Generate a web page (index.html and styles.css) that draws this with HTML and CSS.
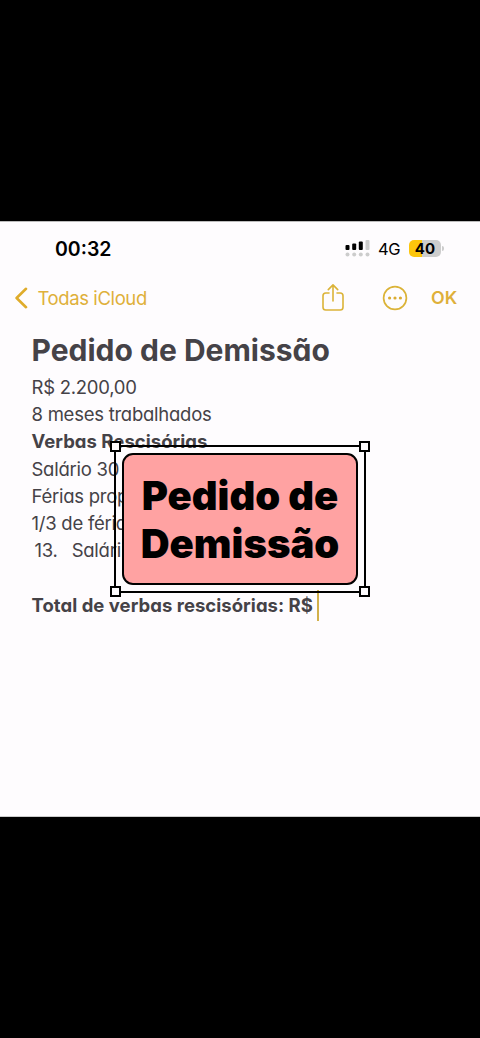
FILE: index.html
```html
<!DOCTYPE html>
<html lang="pt-BR">
<head>
  <meta charset="UTF-8">
  <meta name="viewport" content="width=device-width, initial-scale=1.0">
  <title>Pedido de Demissão</title>
  <link rel="stylesheet" href="styles.css">
</head>
<body>
  <main class="screen">
    <header class="status-bar">
      <span class="time">00:32</span>
      <div class="status-icons">
        <svg class="signal" width="26" height="18" viewBox="0 0 26 18">
          <rect x="0.5" y="6" width="4" height="5" rx="1" fill="#000"/>
          <rect x="7.2" y="4.5" width="4" height="6.5" rx="1" fill="#000"/>
          <rect x="13.8" y="2.5" width="4" height="8.5" rx="1" fill="#000"/>
          <rect x="20.5" y="1" width="4" height="10" rx="1" fill="#ccc"/>
          <g fill="#ccc">
            <circle cx="2.5" cy="15.4" r="2"/>
            <circle cx="9.2" cy="15.4" r="2"/>
            <circle cx="15.8" cy="15.4" r="2"/>
            <circle cx="22.5" cy="15.4" r="2"/>
          </g>
        </svg>
        <span class="network">4G</span>
        <div class="battery">40</div>
        <span class="battery-tip"></span>
      </div>
    </header>

    <nav class="toolbar">
      <a class="back">
        <svg width="13" height="22" viewBox="0 0 13 22" fill="none" stroke="#dfac2b" stroke-width="2.6" stroke-linecap="round" stroke-linejoin="round">
          <path d="M11 1.8 L1.6 11 L11 20.2"/>
        </svg>
        <span>Todas iCloud</span>
      </a>
      <div class="actions">
        <svg width="22" height="28" viewBox="0 0 22 28" fill="none" stroke="#dbb338" stroke-width="1.6" stroke-linecap="round" stroke-linejoin="round">
          <path d="M7 9H3.8Q1 9 1 11.8V23.2Q1 26 3.8 26H18.2Q21 26 21 23.2V11.8Q21 9 18.2 9H15"/>
          <path d="M11 17V1M6.3 5.6L11 0.9L15.7 5.6"/>
        </svg>
        <svg class="more" width="26" height="26" viewBox="0 0 26 26">
          <circle cx="13" cy="13" r="11.4" fill="none" stroke="#dbb338" stroke-width="1.7"/>
          <g fill="#dbac32">
            <circle cx="7.6" cy="13" r="1.6"/>
            <circle cx="13" cy="13" r="1.6"/>
            <circle cx="18.4" cy="13" r="1.6"/>
          </g>
        </svg>
        <span class="ok">OK</span>
      </div>
    </nav>

    <article class="note">
      <h1>Pedido de Demissão</h1>
      <p>R$ 2.200,00</p>
      <p>8 meses trabalhados</p>
      <p class="strong">Verbas Rescisórias</p>
      <p>Salário 30</p>
      <p>Férias prop</p>
      <p>1/3 de féria</p>
      <p class="item"><span>13.</span><span>Salári</span></p>
      <p class="total strong">Total de verbas rescisórias: R$<span class="caret"></span></p>
    </article>

    <div class="selection">
      <div class="sticker">Pedido de<br>Demissão</div>
      <i class="handle top left"></i>
      <i class="handle top right"></i>
      <i class="handle bottom left"></i>
      <i class="handle bottom right"></i>
    </div>
  </main>
</body>
</html>
```
FILE: styles.css
```css
* {
  box-sizing: border-box;
}

body {
  margin: 0;
  min-height: 1038px;
  padding-top: 221px;
  background: #000;
  font-family: Inter, "Liberation Sans", sans-serif;
}

.screen {
  position: relative;
  height: 596px;
  background: #fefcfe;
  border-top: 1px solid #bbb;
  border-bottom: 1px solid #ccc;
}

.status-bar {
  display: flex;
  justify-content: space-between;
  align-items: center;
  height: 54px;
  padding: 0 36px 0 55px;
}

.time {
  font-size: 19.5px;
  font-weight: 600;
}

.status-icons {
  display: flex;
  align-items: center;
  height: 20px;
  margin-top: -2px;
}

.network {
  margin-left: 7px;
  width: 23px;
  padding-top: 1px;
  font-size: 16.5px;
  letter-spacing: -0.4px;
  white-space: nowrap;
}

.battery {
  width: 32px;
  height: 17px;
  margin-left: 8px;
  border-radius: 5px;
  background: linear-gradient(to right, #fcc60c 42%, #cdcdcd 42%);
  font-size: 15px;
  line-height: 17px;
  font-weight: 700;
  text-align: center;
}

.battery-tip {
  width: 2px;
  height: 5px;
  margin-left: 1px;
  border-radius: 0 2px 2px 0;
  background: #ccc;
}

.toolbar {
  display: flex;
  justify-content: space-between;
  align-items: center;
  height: 43px;
  padding: 0 23px 0 15px;
  color: #dfb03a;
}

.back {
  display: flex;
  align-items: center;
  gap: 9.5px;
  font-size: 18.5px;
  line-height: 22px;
  letter-spacing: -0.4px;
}

.actions {
  display: flex;
  align-items: center;
}

.more {
  margin: 0 23px 0 38px;
}

.ok {
  width: 26px;
  font-size: 17.8px;
  font-weight: 600;
}

.note {
  padding: 10px 32px 0 31.5px;
  color: #454247;
  font-feature-settings: "cv11";
  white-space: nowrap;
}

.note h1 {
  margin: 0;
  font-size: 30px;
  line-height: 43px;
  font-weight: 700;
}

.note p {
  margin: 0;
  height: 27.2px;
  font-size: 18.5px;
  line-height: 30.6px;
  letter-spacing: -0.25px;
}

.note .strong {
  font-weight: 700;
  letter-spacing: 0.04px;
}

.note .item {
  display: flex;
  gap: 14px;
  padding-left: 3px;
}

.note .total {
  display: flex;
  margin-top: 27.5px;
}

.caret {
  width: 2px;
  height: 31px;
  margin: 0 0 0 4px;
  background: #d2b14b;
}

.selection {
  position: absolute;
  top: 223px;
  left: 114px;
  width: 252px;
  height: 148px;
  padding: 8px;
}

.selection::before {
  content: "";
  position: absolute;
  inset: 0;
  border: 2px solid #000;
}

.sticker {
  height: 100%;
  padding-top: 17px;
  border: 2px solid #000;
  border-radius: 11px;
  background: #ffa2a2;
  color: #000;
  font-size: 40px;
  line-height: 48px;
  font-weight: 900;
  text-align: center;
  white-space: nowrap;
}

.handle {
  position: absolute;
  width: 11px;
  height: 11px;
  border: 2px solid #000;
  background: #fefcfe;
}

.top {
  top: -4px;
}

.bottom {
  bottom: -4px;
}

.left {
  left: -4px;
}

.right {
  right: -4px;
}
```
